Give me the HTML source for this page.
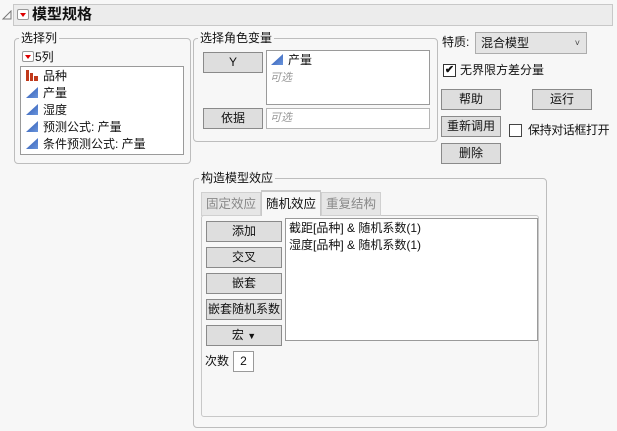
<!DOCTYPE html><html><head><meta charset="utf-8"><style>
*{box-sizing:border-box}
body{margin:0;width:617px;height:431px;background:#f7f7f7;position:relative;overflow:hidden;font-family:"Liberation Sans","Noto Sans CJK SC",sans-serif;font-size:12px;color:#111}
.a{position:absolute;white-space:nowrap}
.btn{position:absolute;background:#dedede;border:1px solid #8a8a8a;text-align:center;line-height:18px;font-size:12px;white-space:nowrap}
.grp{position:absolute;border:1px solid #bdbdbd;border-radius:4px}
.lg{position:absolute;background:#f7f7f7;padding:0 2px;font-size:12px;line-height:14px}
.box{position:absolute;background:#fff;border:1px solid #9a9a9a}
.tri{display:inline-block;width:12px;height:11px;background:linear-gradient(135deg,#2a55b0,#6a95dd);clip-path:polygon(100% 0,100% 100%,0 100%);vertical-align:-1px;margin-right:5px}
.it{position:absolute;left:5px;line-height:17px;white-space:nowrap}
.red{position:absolute;width:12px;height:11px;background:#fff;border:1px solid #999;border-radius:2px}
.red:after{content:"";position:absolute;left:2px;top:3px;border-left:3px solid transparent;border-right:3px solid transparent;border-top:4px solid #d00}
.gray{color:#999;font-style:italic;font-size:11px}
</style></head><body>
<svg class="a" style="left:2px;top:10px" width="10" height="10"><path d="M1 9 L9 1 L9 9 Z" fill="none" stroke="#777"/></svg>
<div class="a" style="left:13px;top:4px;width:600px;height:22px;background:#ececec;border:1px solid #c8c8c8"></div>
<div class="red" style="left:17px;top:9px"></div>
<div class="a" style="left:32px;top:4px;line-height:22px;font-size:15px;font-weight:bold">模型规格</div>

<div class="grp" style="left:14px;top:38px;width:177px;height:126px"></div>
<div class="lg" style="left:19px;top:31px">选择列</div>
<div class="red" style="left:22px;top:51px"></div>
<div class="a" style="left:35px;top:49px;line-height:16px">5列</div>
<div class="box" style="left:20px;top:66px;width:164px;height:89px">
<div class="it" style="top:1px"><svg width="13" height="11" style="vertical-align:-1px;margin-right:4px"><rect x="0" y="0" width="3" height="11" fill="#c0391b"/><rect x="4" y="3" width="3" height="8" fill="#c0391b"/><rect x="8" y="6" width="4" height="5" fill="#c0391b"/></svg>品种</div>
<div class="it" style="top:18px"><span class="tri"></span>产量</div>
<div class="it" style="top:35px"><span class="tri"></span>湿度</div>
<div class="it" style="top:52px"><span class="tri"></span>预测公式: 产量</div>
<div class="it" style="top:69px"><span class="tri"></span>条件预测公式: 产量</div>
</div>

<div class="grp" style="left:193px;top:38px;width:245px;height:104px"></div>
<div class="lg" style="left:198px;top:31px">选择角色变量</div>
<div class="btn" style="left:203px;top:52px;width:60px;height:21px;line-height:19px">Y</div>
<div class="box" style="left:266px;top:50px;width:164px;height:55px">
<div class="it" style="top:1px;left:4px"><span class="tri"></span>产量</div>
<div class="it gray" style="top:19px;left:3px">可选</div></div>
<div class="btn" style="left:203px;top:108px;width:60px;height:21px;line-height:19px">依据</div>
<div class="box" style="left:266px;top:108px;width:164px;height:21px;border-color:#b5b5b5"><div class="it gray" style="top:1px;left:3px">可选</div></div>

<div class="a" style="left:442px;top:34px;line-height:16px">特质:</div>
<div class="a" style="left:475px;top:32px;width:112px;height:22px;background:#e4e4e4;border:1px solid #adadad;padding-left:5px;line-height:20px">混合模型<span style="position:absolute;right:6px;top:0;font-size:9px;color:#444">˅</span></div>
<div class="a" style="left:443px;top:64px;width:13px;height:13px;background:#fff;border:1px solid #333;font-size:11px;line-height:11px;text-align:center;font-weight:bold">✔</div>
<div class="a" style="left:460px;top:62px;line-height:16px">无界限方差分量</div>
<div class="btn" style="left:441px;top:89px;width:60px;height:21px">帮助</div>
<div class="btn" style="left:532px;top:89px;width:60px;height:21px">运行</div>
<div class="btn" style="left:441px;top:116px;width:60px;height:21px">重新调用</div>
<div class="a" style="left:509px;top:124px;width:13px;height:13px;background:#fff;border:1px solid #444"></div>
<div class="a" style="left:528px;top:122px;line-height:16px;letter-spacing:-0.4px">保持对话框打开</div>
<div class="btn" style="left:441px;top:143px;width:60px;height:21px">删除</div>

<div class="grp" style="left:193px;top:178px;width:354px;height:250px"></div>
<div class="lg" style="left:199px;top:171px">构造模型效应</div>
<div class="a" style="left:201px;top:215px;width:338px;height:202px;border:1px solid #c8c8c8;border-radius:3px;background:#f7f7f7"></div>
<div class="a" style="left:201px;top:192px;width:60px;height:24px;background:#e6e6e6;border:1px solid #d0d0d0;color:#888;text-align:center;line-height:22px;font-size:12.5px">固定效应</div>
<div class="a" style="left:261px;top:190px;width:60px;height:26px;background:#f7f7f7;border:1px solid #c8c8c8;border-top:2px solid #c8c8c8;border-bottom:none;text-align:center;line-height:24px;font-size:12.5px">随机效应</div>
<div class="a" style="left:321px;top:192px;width:60px;height:24px;background:#e6e6e6;border:1px solid #d0d0d0;color:#888;text-align:center;line-height:22px;font-size:12.5px">重复结构</div>
<div class="btn" style="left:206px;top:221px;width:76px;height:21px">添加</div>
<div class="btn" style="left:206px;top:247px;width:76px;height:21px">交叉</div>
<div class="btn" style="left:206px;top:273px;width:76px;height:21px">嵌套</div>
<div class="btn" style="left:206px;top:299px;width:76px;height:21px">嵌套随机系数</div>
<div class="btn" style="left:206px;top:325px;width:76px;height:21px">宏 <span style="font-size:9px">▼</span></div>
<div class="a" style="left:205px;top:353px;line-height:16px">次数</div>
<div class="box" style="left:233px;top:351px;width:21px;height:21px;text-align:center;line-height:19px">2</div>
<div class="box" style="left:285px;top:218px;width:253px;height:123px">
<div class="it" style="top:1px;left:3px">截距[品种] &amp; 随机系数(1)</div>
<div class="it" style="top:18px;left:3px">湿度[品种] &amp; 随机系数(1)</div></div>
</body></html>
